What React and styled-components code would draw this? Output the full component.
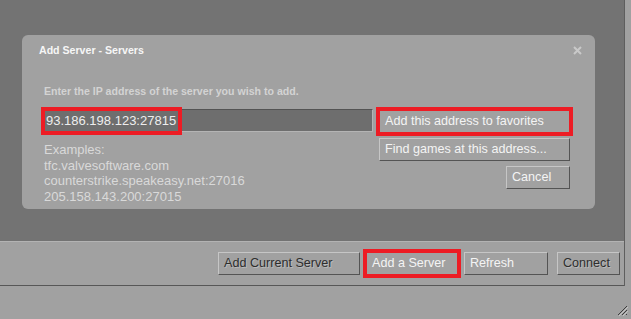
import React from "react";
import styled, { createGlobalStyle, css } from "styled-components";

const Global = createGlobalStyle`
  html, body { margin: 0; padding: 0; }
  body {
    background: #a1a1a1;
    overflow: hidden;
    font-family: "Liberation Sans", Arial, sans-serif;
  }
  * { box-sizing: border-box; }
`;

const Window = styled.div`
  width: 631px;
  height: 319px;
  display: flex;
  flex-direction: column;
  background: #a1a1a1;
`;

const MainRow = styled.div`
  display: flex;
`;

const Content = styled.div`
  width: 625px;
  border-right: 1px solid #5e5e5e;
  display: flex;
  flex-direction: column;
`;

const ListArea = styled.div`
  position: relative;
  height: 241px;
  background: #737373;
`;

const ButtonBar = styled.div`
  height: 45px;
  border-top: 1px solid #b3b3b3;
  border-bottom: 1px solid #575757;
  display: flex;
  justify-content: flex-end;
  align-items: flex-start;
  gap: 6px;
  padding: 10px 4px 0 0;
`;

const Footer = styled.div`
  flex: 1;
  display: flex;
  justify-content: flex-end;
  align-items: flex-end;
  padding: 0 3px 3px 0;
`;

const Button = styled.button`
  height: 23px;
  width: ${(p) => p.$w}px;
  padding: 0 5px;
  margin-left: ${(p) => p.$ml || 0}px;
  text-align: left;
  font-family: "Liberation Sans", Arial, sans-serif;
  font-size: 12.6px;
  line-height: 21px;
  background: transparent;
  border-style: solid;
  border-width: 1px;
  border-color: #c6c6c6 #545454 #545454 #c6c6c6;
  color: #f4f4f4;
  white-space: nowrap;
  cursor: default;
  align-self: ${(p) => p.$self || "auto"};
  ${(p) =>
    p.$dim &&
    css`
      color: #2e2e2e;
      text-shadow: 1px 1px 0 #bababa;
    `}
  ${(p) =>
    p.$highlight &&
    css`
      outline: 4px solid #ed1c24;
      outline-offset: -1px;
    `}
`;

const Dialog = styled.div`
  position: absolute;
  left: 22px;
  top: 35px;
  width: 573px;
  height: 174px;
  background: #a1a1a1;
  border-radius: 6px;
  display: flex;
  flex-direction: column;
  padding: 8px 13px 0 17px;
`;

const TitleBar = styled.div`
  height: 14px;
  display: flex;
  justify-content: space-between;
  align-items: center;
`;

const Title = styled.div`
  font-weight: bold;
  font-size: 10.6px;
  line-height: 14px;
  color: #f6f6f6;
`;

const DialogBody = styled.div`
  margin-top: 27px;
  padding: 0 12px 0 2px;
`;

const Instruction = styled.div`
  margin-left: 3px;
  font-weight: bold;
  font-size: 10.6px;
  line-height: 14px;
  color: #d3d3d3;
`;

const FormGrid = styled.div`
  margin-top: 11px;
  display: grid;
  grid-template-columns: 332px 191px;
  column-gap: 6px;
`;

const InputField = styled.div`
  position: relative;
  height: 23px;
  background: #6e6e6e;
  border-style: solid;
  border-width: 1px;
  border-color: #535353 #b4b4b4 #b4b4b4 #535353;
  padding-left: 4px;
  font-size: 13px;
  line-height: 21px;
  color: #ededed;
`;

const Highlight = styled.span`
  position: absolute;
  left: -1px;
  top: -3px;
  width: ${(p) => p.$w}px;
  height: 28px;
  border: 4px solid #ed1c24;
  pointer-events: none;
`;

const Examples = styled.div`
  margin-top: 10px;
  padding-left: 3px;
  font-size: 13px;
  line-height: 15.5px;
  color: #d9d9d9;
`;

const ButtonColumn = styled.div`
  display: flex;
  flex-direction: column;
  gap: 5px;
  padding-top: 1px;
`;

const CloseIcon = () => (
  <svg width="9" height="9" viewBox="0 0 9 9" style={{ display: "block" }}>
    <path d="M1 1 L8 8 M8 1 L1 8" stroke="#c9c9c9" strokeWidth="2" />
  </svg>
);

const Grip = () => (
  <svg width="11" height="11" viewBox="0 0 11 11" style={{ display: "block" }}>
    <path d="M10 1 L1 10 M10 5 L5 10 M10 9 L9 10" stroke="#3c3c3c" strokeWidth="1" />
    <path d="M11 2 L2 11 M11 6 L6 11" stroke="#c4c4c4" strokeWidth="1" />
  </svg>
);

export default function App() {
  return (
    <>
      <Global />
      <Window>
        <MainRow>
          <Content>
            <ListArea>
              <Dialog>
                <TitleBar>
                  <Title>Add Server - Servers</Title>
                  <CloseIcon />
                </TitleBar>
                <DialogBody>
                  <Instruction>Enter the IP address of the server you wish to add.</Instruction>
                  <FormGrid>
                    <div>
                      <InputField>
                        93.186.198.123:27815
                        <Highlight $w={141} />
                      </InputField>
                      <Examples>
                        <div>Examples:</div>
                        <div>tfc.valvesoftware.com</div>
                        <div>counterstrike.speakeasy.net:27016</div>
                        <div>205.158.143.200:27015</div>
                      </Examples>
                    </div>
                    <ButtonColumn>
                      <Button $highlight>Add this address to favorites</Button>
                      <Button>Find games at this address...</Button>
                      <Button $w={64} $self="flex-end">Cancel</Button>
                    </ButtonColumn>
                  </FormGrid>
                </DialogBody>
              </Dialog>
            </ListArea>
            <ButtonBar>
              <Button $w={142} $dim>Add Current Server</Button>
              <Button $w={92} $highlight>Add a Server</Button>
              <Button $w={84}>Refresh</Button>
              <Button $w={63} $ml={3} $dim>Connect</Button>
            </ButtonBar>
          </Content>
        </MainRow>
        <Footer>
          <Grip />
        </Footer>
      </Window>
    </>
  );
}
